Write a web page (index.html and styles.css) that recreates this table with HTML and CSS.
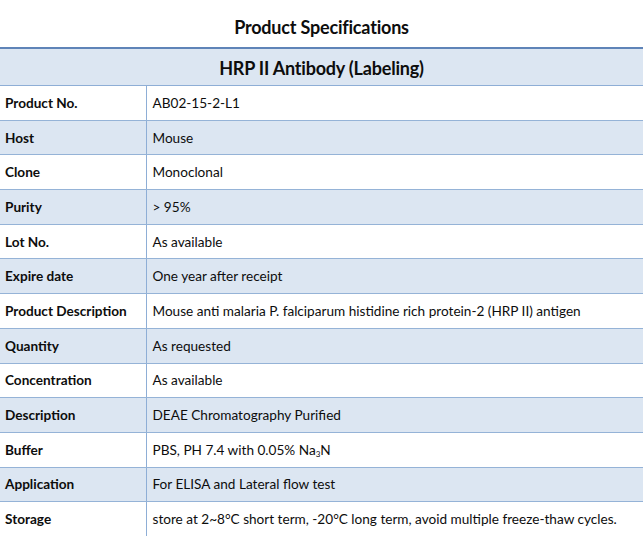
FILE: index.html
```html
<!DOCTYPE html>
<html>
<head>
<meta charset="utf-8">
<link rel="stylesheet" href="styles.css">
</head>
<body>
<div class="page">
  <h1 class="title">Product Specifications</h1>
  <table class="spec">
    <colgroup><col class="col-k"><col class="col-v"></colgroup>
    <thead>
      <tr class="head"><th colspan="2">HRP II Antibody (Labeling)</th></tr>
    </thead>
    <tbody>
      <tr><td class="k">Product No.</td><td class="v">AB02-15-2-L1</td></tr>
      <tr class="alt"><td class="k">Host</td><td class="v">Mouse</td></tr>
      <tr><td class="k">Clone</td><td class="v">Monoclonal</td></tr>
      <tr class="alt"><td class="k">Purity</td><td class="v">&gt; 95%</td></tr>
      <tr><td class="k">Lot No.</td><td class="v">As available</td></tr>
      <tr class="alt"><td class="k">Expire date</td><td class="v">One year after receipt</td></tr>
      <tr><td class="k">Product Description</td><td class="v">Mouse anti malaria P. falciparum histidine rich protein-2 (HRP II) antigen</td></tr>
      <tr class="alt"><td class="k">Quantity</td><td class="v">As requested</td></tr>
      <tr><td class="k">Concentration</td><td class="v">As available</td></tr>
      <tr class="alt"><td class="k">Description</td><td class="v">DEAE Chromatography Purified</td></tr>
      <tr><td class="k">Buffer</td><td class="v">PBS, PH 7.4 with 0.05% Na<sub>3</sub>N</td></tr>
      <tr class="alt"><td class="k">Application</td><td class="v">For ELISA and Lateral flow test</td></tr>
      <tr class="last"><td class="k">Storage</td><td class="v">store at 2~8°C short term, -20°C long term, avoid multiple freeze-thaw cycles.</td></tr>
    </tbody>
  </table>
</div>
</body>
</html>
```

FILE: styles.css
```css
html, body {
  margin: 0;
  padding: 0;
  background: #ffffff;
}
.page {
  width: 643px;
  font-family: Lato, "Open Sans", "Liberation Sans", sans-serif;
  color: #0d0d0d;
}
.title {
  margin: 0;
  height: 47px;
  display: flex;
  align-items: center;
  justify-content: center;
  padding-top: 7px;
  box-sizing: border-box;
  font-size: 18px;
  font-weight: 700;
  letter-spacing: -0.2px;
}
.spec {
  width: 643px;
  border-collapse: collapse;
  table-layout: fixed;
}
.col-k {
  width: 146px;
}
.spec th, .spec td {
  padding: 0;
  vertical-align: middle;
}
.head th {
  height: 35px;
  background: #dce6f2;
  border-top: 2px solid #5f84b8;
  border-bottom: 1px solid #8eaed6;
  font-size: 18px;
  font-weight: 700;
  text-align: center;
  letter-spacing: -0.2px;
  padding-top: 1px;
}
.spec tbody tr {
  height: 34.7px;
}
.spec tbody td {
  border-bottom: 1px solid #95b3d7;
  font-size: 13.6px;
  letter-spacing: 0;
}
.spec tbody tr.last td {
  border-bottom: none;
}
.spec tr.alt td {
  background: #dce6f2;
}
.k {
  padding-left: 5px !important;
  font-weight: 700;
  border-right: 1px solid #8eaed6;
  white-space: nowrap;
}
.v {
  padding-left: 6px !important;
  font-weight: 400;
  white-space: nowrap;
}
sub {
  font-size: 8px;
  vertical-align: -2px;
  line-height: 0;
}
```
